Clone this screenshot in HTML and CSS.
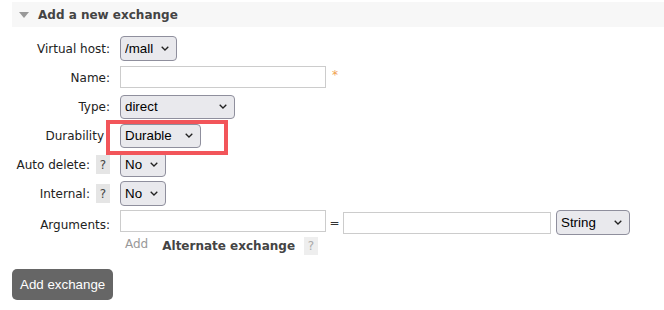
FILE: index.html
```html
<!DOCTYPE html>
<html lang="en">
<head>
    <meta charset="UTF-8">
    <meta name="viewport" content="width=device-width, initial-scale=1.0">
    <title>Add a new exchange</title>
    <link rel="stylesheet" href="styles.css">
</head>
<body>
    <div class="section">
        <h2 class="section-title"><span class="toggle"></span>Add a new exchange</h2>

        <form class="exchange-form">
            <div class="form-grid">
                <label class="field-label">Virtual host:</label>
                <div class="field">
                    <select class="ctl ctl-vhost"><option>/mall</option></select>
                </div>

                <label class="field-label">Name:</label>
                <div class="field">
                    <input class="txt txt-key" type="text">
                    <span class="mand">*</span>
                </div>

                <label class="field-label">Type:</label>
                <div class="field">
                    <select class="ctl ctl-type"><option>direct</option></select>
                </div>

                <label class="field-label no-colon">Durability</label>
                <div class="field field-marked">
                    <select class="ctl ctl-durable"><option>Durable</option></select>
                    <!-- highlight drawn over the durability select -->
                    <div class="highlight"></div>
                </div>

                <label class="field-label">Auto delete: <span class="help">?</span></label>
                <div class="field">
                    <select class="ctl ctl-small"><option>No</option></select>
                </div>

                <label class="field-label">Internal: <span class="help">?</span></label>
                <div class="field">
                    <select class="ctl ctl-small"><option>No</option></select>
                </div>

                <label class="field-label label-low">Arguments:</label>
                <div class="field">
                    <input class="txt txt-key" type="text">
                    <span class="eq">=</span>
                    <input class="txt txt-value" type="text">
                    <select class="ctl ctl-argtype"><option>String</option></select>
                </div>

                <span></span>
                <div class="field extras">
                    <span class="add-link">Add</span>
                    <span class="alt-link">Alternate exchange</span>
                    <span class="help help-muted">?</span>
                </div>
            </div>

            <button type="button" class="btn">Add exchange</button>
        </form>
    </div>
</body>
</html>
```

FILE: styles.css
```css
body {
    margin: 0;
    font-family: "DejaVu Sans", Verdana, sans-serif;
    font-size: 12px;
    color: #222;
    background-color: #fff;
}
.section {
    padding: 2px 0 0 12px;
}
.section-title {
    display: flex;
    align-items: center;
    height: 25px;
    margin: 0;
    padding-left: 7px;
    background-color: #f7f7f7;
    color: #444;
    font-size: 12px;
    font-weight: bold;
}
.toggle {
    width: 0;
    height: 0;
    margin-right: 9px;
    border-left: 5px solid transparent;
    border-right: 5px solid transparent;
    border-top: 6px solid #999;
}
.exchange-form {
    padding-top: 7px;
}
.form-grid {
    display: grid;
    grid-template-columns: 98px 1fr;
    grid-auto-rows: 29px;
    column-gap: 10px;
    align-items: center;
}
.field-label {
    display: flex;
    justify-content: flex-end;
    align-items: center;
    gap: 6px;
    white-space: nowrap;
}
.no-colon {
    padding-right: 6px;
}
.label-low {
    padding-top: 4px;
}
.field {
    display: flex;
    align-items: center;
    min-height: 24px;
}
.field-marked {
    position: relative;
}
.highlight {
    position: absolute;
    left: -14px;
    top: -4px;
    width: 114px;
    height: 27px;
    border: 4px solid #f2555a;
    pointer-events: none;
}
.ctl {
    -webkit-appearance: none;
    appearance: none;
    height: 24px;
    margin: 0;
    padding: 0 20px 0 4px;
    border: 1px solid #8f8f9d;
    border-radius: 4px;
    background-color: #e9e9ed;
    background-image: url("data:image/svg+xml,%3Csvg xmlns='http://www.w3.org/2000/svg' width='8' height='5' viewBox='0 0 8 5'%3E%3Cpath d='M0.7 0.7 L4 4 L7.3 0.7' fill='none' stroke='%23222' stroke-width='1.3'/%3E%3C/svg%3E");
    background-repeat: no-repeat;
    background-position: right 7px center;
    color: #000;
    font-family: "Liberation Sans", Arial, sans-serif;
    font-size: 13.33px;
}
.ctl-vhost {
    width: 57px;
    height: 25px;
}
.ctl-type {
    width: 115px;
}
.ctl-durable {
    width: 81px;
}
.ctl-small {
    width: 46px;
    height: 25px;
}
.ctl-argtype {
    width: 74px;
    height: 25px;
    margin-left: 5px;
}
.txt {
    height: 22px;
    margin: 0;
    padding: 0 3px;
    box-sizing: border-box;
    border: 1px solid #ccc;
    background: #fff;
    font-family: "Liberation Sans", Arial, sans-serif;
    font-size: 13.33px;
}
.txt-key {
    width: 206px;
}
.txt-value {
    width: 208px;
}
.field .txt:first-child {
    align-self: flex-start;
}
.mand {
    margin-left: 6px;
    margin-top: -6px;
    color: #f0a050;
    font-size: 12px;
}
.eq {
    width: 17px;
    text-align: center;
    color: #333;
}
.help {
    display: inline-flex;
    justify-content: center;
    align-items: center;
    width: 14px;
    height: 19px;
    background-color: #e5e5e5;
    color: #444;
}
.help-muted {
    background-color: #eee;
    color: #aaa;
    height: 18px;
}
.extras {
    align-self: start;
    gap: 14px;
    padding-left: 5px;
    min-height: 18px;
}
.add-link {
    color: #999;
    margin-top: -4px;
}
.alt-link {
    color: #444;
    font-weight: bold;
    margin-right: -5px;
}
.btn {
    display: block;
    height: 31px;
    margin-top: 3px;
    padding: 0 8px;
    border: none;
    border-radius: 5px;
    background-color: #666;
    color: #fff;
    font-family: "Liberation Sans", Arial, sans-serif;
    font-size: 13.33px;
}
```
